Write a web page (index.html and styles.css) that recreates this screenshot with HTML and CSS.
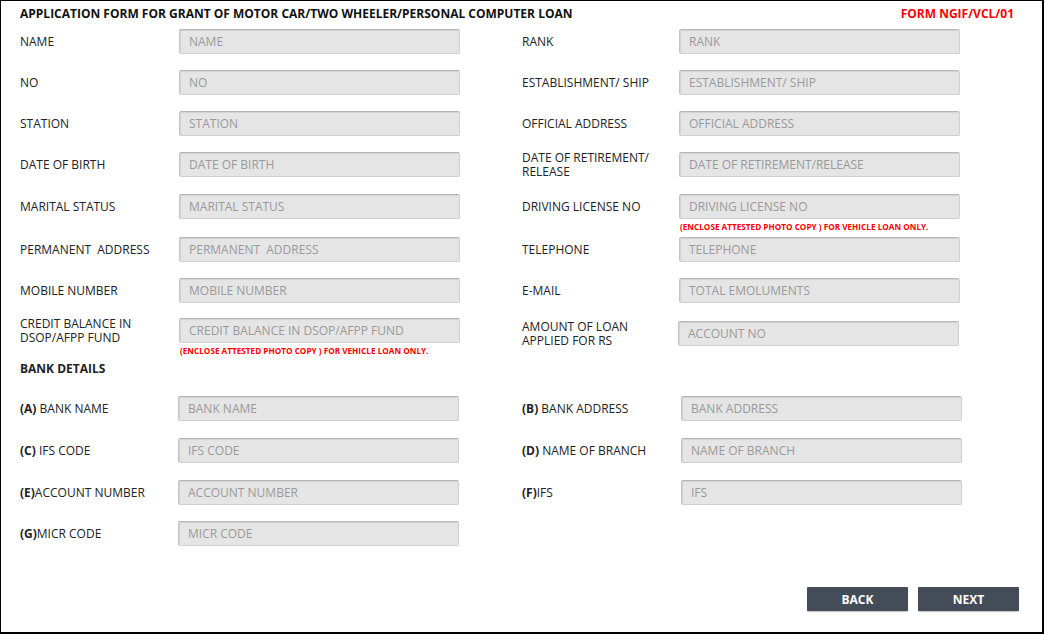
FILE: index.html
```html
<!DOCTYPE html>
<html lang="en">
<head>
<meta charset="utf-8">
<title>Application Form</title>
<link rel="stylesheet" href="styles.css">
</head>
<body>
<div class="frame">
  <header class="head">
    <h1 class="title">APPLICATION FORM FOR GRANT OF MOTOR CAR/TWO WHEELER/PERSONAL COMPUTER LOAN</h1>
    <span class="code">FORM NGIF/VCL/01</span>
  </header>

  <div class="main">
    <div class="field left"><div class="lbl"><span>NAME</span></div><div class="fld"><div class="box">NAME</div></div></div>
    <div class="field right"><div class="lbl"><span>RANK</span></div><div class="fld"><div class="box">RANK</div></div></div>

    <div class="field left"><div class="lbl"><span>NO</span></div><div class="fld"><div class="box">NO</div></div></div>
    <div class="field right"><div class="lbl"><span>ESTABLISHMENT/ SHIP</span></div><div class="fld"><div class="box">ESTABLISHMENT/ SHIP</div></div></div>

    <div class="field left"><div class="lbl"><span>STATION</span></div><div class="fld"><div class="box">STATION</div></div></div>
    <div class="field right"><div class="lbl"><span>OFFICIAL ADDRESS</span></div><div class="fld"><div class="box">OFFICIAL ADDRESS</div></div></div>

    <div class="field left"><div class="lbl"><span>DATE OF BIRTH</span></div><div class="fld"><div class="box">DATE OF BIRTH</div></div></div>
    <div class="field right"><div class="lbl"><span>DATE OF RETIREMENT/<br>RELEASE</span></div><div class="fld"><div class="box">DATE OF RETIREMENT/RELEASE</div></div></div>

    <div class="field left"><div class="lbl"><span>MARITAL STATUS</span></div><div class="fld"><div class="box">MARITAL STATUS</div></div></div>
    <div class="field right"><div class="lbl"><span>DRIVING LICENSE NO</span></div><div class="fld"><div class="box">DRIVING LICENSE NO</div><p class="note">(ENCLOSE ATTESTED PHOTO COPY ) FOR VEHICLE LOAN ONLY.</p></div></div>

    <div class="field left"><div class="lbl"><span>PERMANENT&nbsp; ADDRESS</span></div><div class="fld"><div class="box">PERMANENT&nbsp; ADDRESS</div></div></div>
    <div class="field right"><div class="lbl"><span>TELEPHONE</span></div><div class="fld"><div class="box">TELEPHONE</div></div></div>

    <div class="field left"><div class="lbl"><span>MOBILE NUMBER</span></div><div class="fld"><div class="box">MOBILE NUMBER</div></div></div>
    <div class="field right"><div class="lbl"><span>E-MAIL</span></div><div class="fld"><div class="box">TOTAL EMOLUMENTS</div></div></div>

    <div class="field left"><div class="lbl"><span>CREDIT BALANCE IN<br>DSOP/AFPP FUND</span></div><div class="fld"><div class="box">CREDIT BALANCE IN DSOP/AFPP FUND</div><p class="note">(ENCLOSE ATTESTED PHOTO COPY ) FOR VEHICLE LOAN ONLY.</p></div></div>
    <div class="field right shifted"><div class="lbl"><span>AMOUNT OF LOAN<br>APPLIED FOR RS</span></div><div class="fld"><div class="box">ACCOUNT NO</div></div></div>
  </div>

  <h2 class="section">BANK DETAILS</h2>

  <div class="bank">
    <div class="field left"><div class="lbl"><span><b>(A)</b> BANK NAME</span></div><div class="fld"><div class="box">BANK NAME</div></div></div>
    <div class="field right"><div class="lbl"><span><b>(B)</b> BANK ADDRESS</span></div><div class="fld"><div class="box">BANK ADDRESS</div></div></div>

    <div class="field left"><div class="lbl"><span><b>(C)</b> IFS CODE</span></div><div class="fld"><div class="box">IFS CODE</div></div></div>
    <div class="field right"><div class="lbl"><span><b>(D)</b> NAME OF BRANCH</span></div><div class="fld"><div class="box">NAME OF BRANCH</div></div></div>

    <div class="field left"><div class="lbl"><span><b>(E)</b>ACCOUNT NUMBER</span></div><div class="fld"><div class="box">ACCOUNT NUMBER</div></div></div>
    <div class="field right"><div class="lbl"><span><b>(F)</b>IFS</span></div><div class="fld"><div class="box">IFS</div></div></div>

    <div class="field left"><div class="lbl"><span><b>(G)</b>MICR CODE</span></div><div class="fld"><div class="box">MICR CODE</div></div></div>
  </div>

  <div class="actions">
    <button class="btn" type="button">BACK</button>
    <button class="btn" type="button">NEXT</button>
  </div>
</div>
</body>
</html>
```

FILE: styles.css
```css
* { box-sizing: border-box; }

html, body {
  margin: 0;
  padding: 0;
  background: #fff;
}

body {
  font-family: "Open Sans", "Liberation Sans", sans-serif;
  font-size: 12px;
  color: #222;
}

.frame {
  width: 1044px;
  height: 634px;
  border: 1px solid #000;
  border-right-width: 2px;
  border-bottom-width: 2px;
  padding: 0 0 0 19px;
  display: flex;
  flex-direction: column;
}

.head {
  height: 27px;
  display: flex;
  align-items: center;
  justify-content: space-between;
  padding-right: 28px;
  padding-bottom: 2px;
  margin-bottom: 1px;
}

.title {
  margin: 0;
  font-size: 12px;
  font-weight: 700;
  color: #111;
}

.code {
  font-weight: 700;
  font-size: 12px;
  color: #f00;
}

.main {
  display: grid;
  grid-template-columns: 440px 438px;
  grid-template-rows: 41px 41px 41px 42px 43px 41px 40px 25px;
  column-gap: 62px;
}

.field {
  display: grid;
  align-items: start;
}

.main .left { grid-template-columns: 159px 281px; }
.main .right { grid-template-columns: 157px 281px; }

.field.shifted {
  grid-template-columns: 156px 281px;
  margin-top: 3px;
}

.lbl {
  height: 25px;
  display: flex;
  align-items: center;
  line-height: 14px;
  color: #222;
  white-space: nowrap;
}

.lbl b { font-weight: 700; }

.fld { position: relative; }

.box {
  height: 25px;
  line-height: 23px;
  padding-left: 9px;
  background: #e5e5e5;
  border: 1px solid #cfcfcf;
  border-top-color: #b5b5b5;
  border-left-color: #c4c4c4;
  border-radius: 2px;
  box-shadow: inset 1px 1px 1px rgba(0,0,0,0.08);
  color: #9a9a9a;
  white-space: nowrap;
}

.note {
  margin: 3px 0 0 1px;
  font-size: 8.2px;
  line-height: 10px;
  font-weight: 700;
  color: #f00;
  white-space: nowrap;
}

.section {
  margin: 19px 0 0 0;
  height: 14px;
  line-height: 14px;
  font-size: 12px;
  font-weight: 700;
  color: #222;
}

.bank {
  display: grid;
  grid-template-columns: 439px 440px;
  grid-template-rows: 42px 42px 41px 25px;
  column-gap: 63px;
  margin-top: 20px;
}

.bank .left { grid-template-columns: 158px 281px; }
.bank .right { grid-template-columns: 159px 281px; }

.actions {
  margin-top: 41px;
  display: flex;
  justify-content: flex-end;
  gap: 10px;
  padding-right: 23px;
}

.btn {
  width: 101px;
  height: 24px;
  border: 0;
  border-radius: 1px;
  background: #444c58;
  color: #fff;
  font-family: inherit;
  font-size: 12px;
  font-weight: 700;
  padding: 0;
  box-shadow: 0 1px 1px rgba(0,0,0,0.25);
}
```
